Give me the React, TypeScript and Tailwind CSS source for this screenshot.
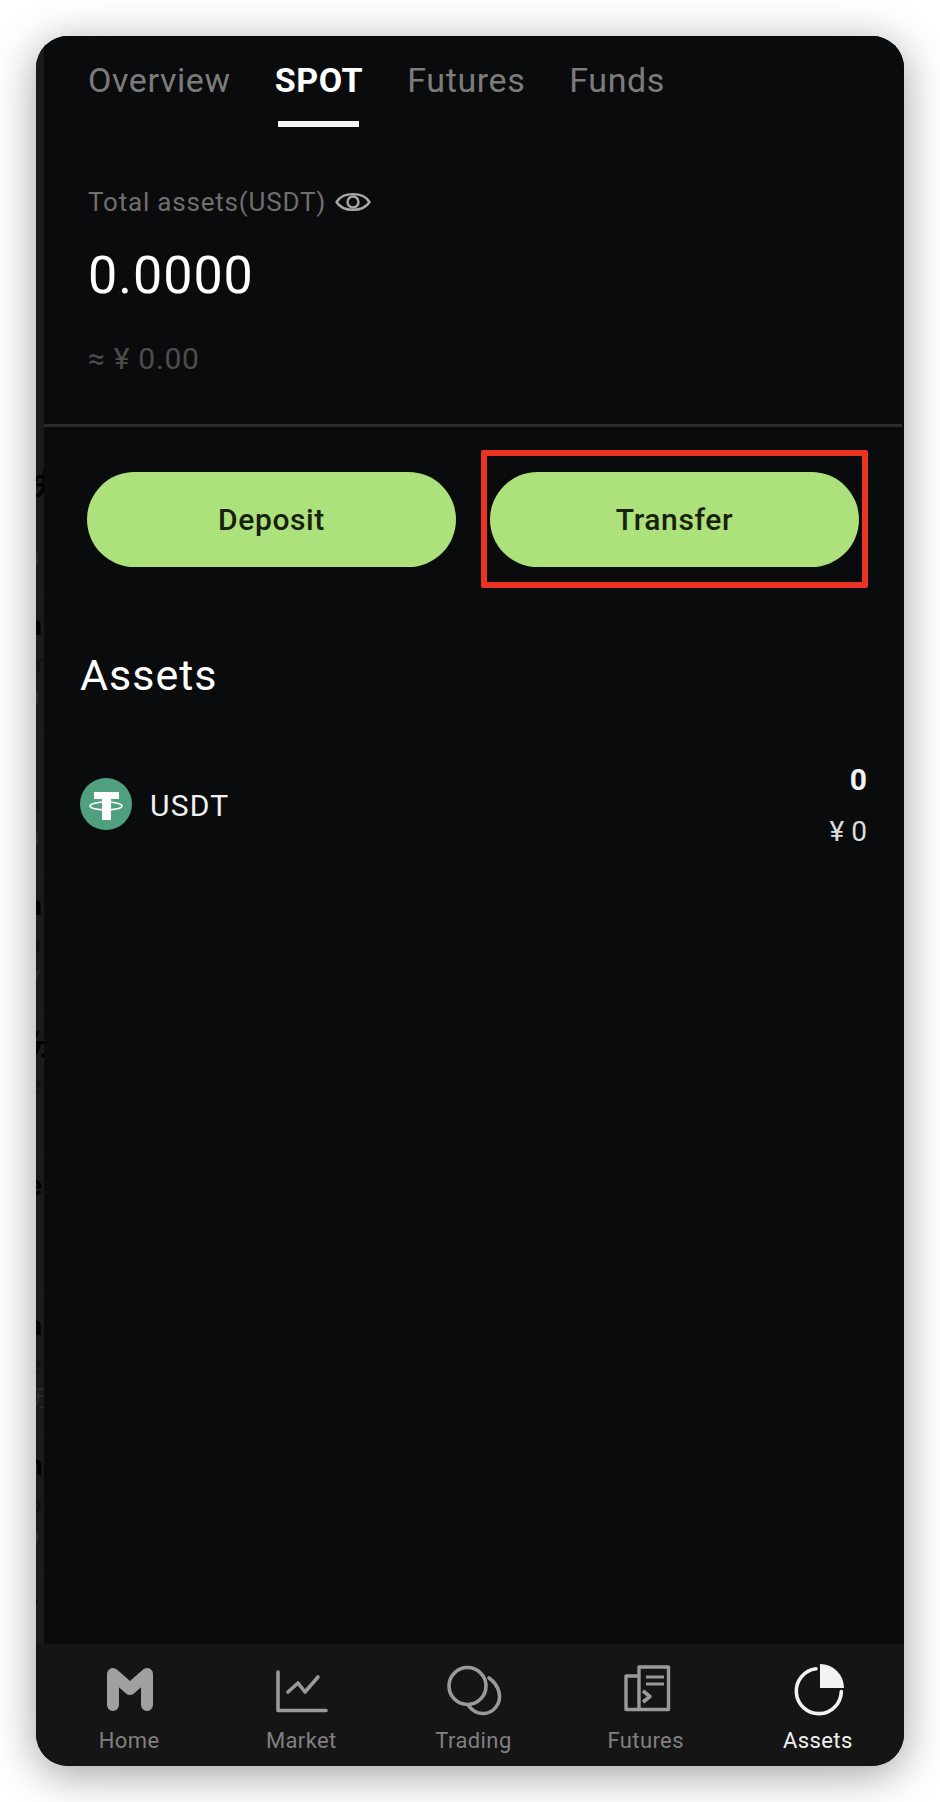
const font = { fontFamily: 'Roboto, "Noto Sans CJK SC", sans-serif' };

const stripRows = [
  ["快", "", "3"],
  ["a", "m", "0"],
  ["", "a", "8"],
  ["a", "a", "√"],
  ["分", "e", "l"],
  ["e", "", ""],
  ["a", "e", "历"],
  ["n", "o", "9"],
  ["r", "", ""],
];

function LeftStrip() {
  return (
    <div className="flex w-[8px] shrink-0 flex-col overflow-hidden bg-[#1a1a1a] pt-[417px]">
      {stripRows.map((row, i) => (
        <div
          key={i}
          className="flex h-[140px] shrink-0 flex-col overflow-hidden border-b border-[#222222] pt-[14px]"
        >
          <span className="ml-[-9px] h-[38px] text-[28px] leading-[38px] font-bold whitespace-nowrap text-[#000000]">{row[0]}</span>
          <span className="ml-[-9px] h-[38px] text-[26px] leading-[38px] whitespace-nowrap text-[#111111]">{row[1]}</span>
          <span className="ml-[-9px] h-[32px] text-[22px] leading-[32px] whitespace-nowrap text-[#2c2c2c]">{row[2]}</span>
        </div>
      ))}
    </div>
  );
}

function EyeIcon() {
  return (
    <svg width="36" height="24" viewBox="0 0 36 24" fill="none" stroke="#a8a8a8" strokeWidth="2.4">
      <path d="M1.5 12C8 1.5 28 1.5 34.5 12C28 22.5 8 22.5 1.5 12Z" strokeLinejoin="round" />
      <circle cx="18" cy="12" r="5.5" />
    </svg>
  );
}

function TetherIcon() {
  return (
    <svg width="52" height="52" viewBox="0 0 52 52" className="shrink-0">
      <circle cx="26" cy="26" r="26" fill="#50a080" />
      <path d="M14 14H39V21H31V42H22V21H14Z" fill="#ffffff" />
      <ellipse cx="26" cy="28" rx="16" ry="4" fill="none" stroke="#ffffff" strokeWidth="1.6" />
    </svg>
  );
}

function HomeIcon() {
  return (
    <svg width="56" height="56" viewBox="0 0 56 56" fill="none" stroke="#a0a0a0" strokeWidth="12" strokeLinecap="round" strokeLinejoin="round">
      <path d="M12 43V12L29 27L46 12V43" />
    </svg>
  );
}

function MarketIcon() {
  return (
    <svg width="56" height="56" viewBox="0 0 56 56" fill="none" stroke="#9a9a9a" strokeWidth="3.6" strokeLinecap="round" strokeLinejoin="round">
      <path d="M5 10V48.5H53" />
      <path d="M15 30L25 21L32 30L45 15" />
    </svg>
  );
}

function TradingIcon() {
  return (
    <svg width="56" height="56" viewBox="0 0 56 56" fill="none" stroke="#9a9a9a" strokeWidth="3.6" className="overflow-visible">
      <circle cx="22.5" cy="24" r="18.5" />
      <path d="M44 16C54 23 58 36 51 45C44 54 31 54 23 43" strokeLinecap="round" />
    </svg>
  );
}

function FuturesIcon() {
  return (
    <svg width="56" height="56" viewBox="0 0 56 56" fill="none" stroke="#9a9a9a" strokeWidth="3.4" strokeLinejoin="round">
      <path d="M21 5H50.5V47.5H21Z" />
      <path d="M21 14H8V47.5H21" />
      <path d="M28 15H46M28 22H46" strokeWidth="3.2" />
      <path d="M25 29L32 34.5L25 40" strokeWidth="3.6" />
    </svg>
  );
}

function AssetsIcon() {
  return (
    <svg width="56" height="56" viewBox="0 0 56 56" fill="none">
      <path d="M26 6.8A22.5 22.5 0 1 0 51.3 29.5" stroke="#f2f2f2" strokeWidth="3.6" strokeLinecap="round" />
      <path d="M30 26V2A24 24 0 0 1 54 26Z" fill="#f2f2f2" />
    </svg>
  );
}

const nav = [
  { label: "Home", Icon: HomeIcon, active: false },
  { label: "Market", Icon: MarketIcon, active: false },
  { label: "Trading", Icon: TradingIcon, active: false },
  { label: "Futures", Icon: FuturesIcon, active: false },
  { label: "Assets", Icon: AssetsIcon, active: true },
];

export default function App() {
  return (
    <div className="h-[1802px] w-[940px] bg-white p-[36px]" style={font}>
      <div className="flex h-[1730px] w-[868px] flex-col overflow-hidden rounded-[32px] bg-[#0a0b0d] shadow-[0_8px_44px_rgba(0,0,0,0.38)]">
        <div className="flex h-[1608px] min-h-0">
          <LeftStrip />
          <main className="flex min-w-0 flex-1 flex-col overflow-hidden bg-[#0a0b0d]">
            <div className="flex gap-[44px] pt-[24px] pl-[44px] text-[34px] leading-[40px] tracking-[0.6px] text-[#7c7c7c]">
              <span>Overview</span>
              <div className="flex flex-col items-center">
                <span className="font-bold text-white">SPOT</span>
                <div className="mt-[21px] h-[6px] w-[81px] bg-[#f5f5f7]" />
              </div>
              <span>Futures</span>
              <span>Funds</span>
            </div>

            <div className="mt-[60px] flex items-center gap-[9px] pl-[44px] text-[26px] leading-[30px] tracking-[0.8px] text-[#6f6f6f]">
              <span>Total assets(USDT)</span>
              <EyeIcon />
            </div>
            <div className="mt-[29px] pl-[44px] text-[52px] leading-[60px] tracking-[1px] text-white">0.0000</div>
            <div className="mt-[33px] pl-[44px] text-[30px] leading-[40px] tracking-[0.7px] text-[#4c4d4f]">≈ ¥ 0.00</div>

            <div className="mt-[45px] mr-[2px] h-[3px] bg-[#2a2b2d]" />

            <div className="mt-[45px] flex gap-[34px] pr-[45px] pl-[43px]">
              <button className="h-[95px] flex-1 rounded-full bg-[#ace17b] text-[30px] font-medium tracking-[0.6px] text-[#18200f]">
                Deposit
              </button>
              <div className="relative flex-1">
                <button className="h-[95px] w-full rounded-full bg-[#ace17b] text-[30px] font-medium tracking-[0.6px] text-[#18200f]">
                  Transfer
                </button>
                <div className="absolute -top-[22px] -right-[9px] -bottom-[21px] -left-[9px] rounded-[2px] border-[6px] border-[#ea3323]" />
              </div>
            </div>

            <h2 className="mt-[84px] pl-[36px] text-[43px] leading-[48px] font-normal tracking-[1px] text-white">Assets</h2>

            <div className="mt-[63px] flex items-center justify-between pr-[37px] pl-[36px]">
              <div className="mb-[3px] flex items-center gap-[18px]">
                <TetherIcon />
                <span className="pt-[3px] text-[30px] leading-[36px] tracking-[1.2px] text-[#f2f2f2]">USDT</span>
              </div>
              <div className="flex flex-col items-end">
                <span className="text-[30px] leading-[36px] font-bold text-[#f2f2f2]">0</span>
                <span className="mt-[17px] text-[28px] leading-[34px] text-[#dddddd]">¥ 0</span>
              </div>
            </div>
          </main>
        </div>

        <nav className="grid h-[122px] shrink-0 grid-cols-5 bg-[#151515] pl-[7px]">
          {nav.map(({ label, Icon, active }) => (
            <div key={label} className="flex flex-col items-center pt-[18px]">
              <Icon />
              <span className={`mt-[10px] text-[22px] leading-[26px] tracking-[0.4px] ${active ? "text-[#f0f0f0]" : "text-[#808080]"}`}>
                {label}
              </span>
            </div>
          ))}
        </nav>
      </div>
    </div>
  );
}
